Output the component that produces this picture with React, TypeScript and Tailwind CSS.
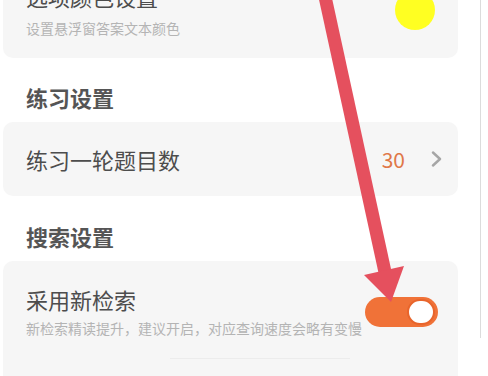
import React from 'react';

const font = { fontFamily: '"Noto Sans CJK SC", "Noto Sans", sans-serif' };

const Toggle: React.FC = () => (
  <div className="w-[73px] h-[30px] rounded-full bg-[#f07238] flex items-center justify-end pr-[3px]">
    <div className="w-[28px] h-[26px] rounded-full bg-white border-2 border-[#e8652c]" />
  </div>
);

const Arrow: React.FC = () => (
  <svg className="absolute left-0 top-0 pointer-events-none" width="488" height="376" viewBox="0 0 488 376">
    <line x1="324" y1="-8" x2="385" y2="272" stroke="#e5505e" strokeWidth="13" />
    <polygon points="364,275 404,266 391,302" fill="#e5505e" />
  </svg>
);

const App: React.FC = () => {
  return (
    <div className="relative w-[488px] h-[376px] overflow-hidden bg-white" style={font}>
      <div className="w-[481px] h-full border-r border-[#dcdcdc] pl-[3px] pr-[22px]">
        {/* 选项颜色设置 */}
        <div className="-mt-[38px] rounded-[10px] bg-[#f6f6f6] pt-[20px] pb-[20px] pl-[23px] pr-[23px] flex items-center justify-between">
          <div>
            <div className="text-[22px] leading-[28px] text-[#4d4d4d]">选项颜色设置</div>
            <div className="mt-2 text-[14px] leading-[20px] text-[#b4b4b4]">设置悬浮窗答案文本颜色</div>
          </div>
          <div className="w-[40px] h-[40px] rounded-full bg-[#ffff22]" />
        </div>

        {/* 练习设置 */}
        <div className="pt-[24px] pb-[10px] pl-[23px] text-[22px] leading-[30px] font-bold text-[#555]">练习设置</div>
        <div className="h-[74px] rounded-[10px] bg-[#f6f6f6] pl-[23px] pr-[16px] flex items-center justify-between">
          <div className="text-[22px] leading-[28px] text-[#4d4d4d]">练习一轮题目数</div>
          <div className="flex items-center gap-[26px]">
            <span className="text-[21px] leading-[28px] text-[#e07848]">30</span>
            <svg width="11" height="16" viewBox="0 0 11 16">
              <path d="M2 1.5 L9 8 L2 14.5" fill="none" stroke="#a6a6a6" strokeWidth="2.4" strokeLinecap="round" strokeLinejoin="round" />
            </svg>
          </div>
        </div>

        {/* 搜索设置 */}
        <div className="pt-[25px] pb-[10px] pl-[23px] text-[22px] leading-[30px] font-bold text-[#555]">搜索设置</div>
        <div className="rounded-[10px] bg-[#f6f6f6] pt-[24px] pb-[40px]">
          <div className="pl-[23px] pr-[20px] flex items-center justify-between">
            <div>
              <div className="text-[22px] leading-[28px] text-[#4d4d4d]">采用新检索</div>
              <div className="mt-[5px] text-[14px] leading-[20px] text-[#b4b4b4]">新检索精读提升，建议开启，对应查询速度会略有变慢</div>
            </div>
            <Toggle />
          </div>
          <div className="mt-[20px] ml-[167px] w-[180px] h-px bg-[#ececec]" />
        </div>
      </div>
      <Arrow />
    </div>
  );
};

export default App;
